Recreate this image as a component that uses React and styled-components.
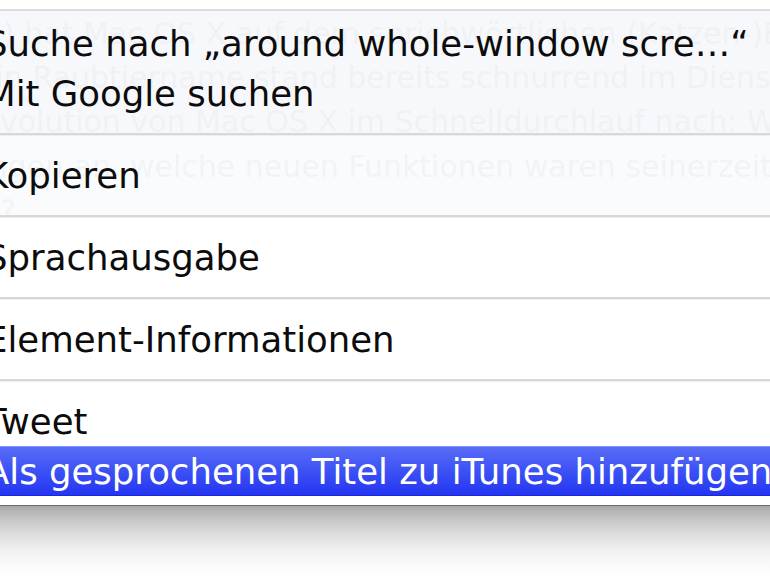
import React from "react";
import styled, { createGlobalStyle, css } from "styled-components";

const Global = createGlobalStyle`
  html, body { margin: 0; padding: 0; background: #fff; }
  body { width: 770px; height: 578px; overflow: hidden; }
  #root { width: 770px; height: 578px; }
`;

const Screen = styled.div`
  position: relative;
  width: 770px;
  height: 578px;
  overflow: hidden;
  background: #fff;
  font-family: "DejaVu Sans", "Liberation Sans", sans-serif;
`;

const Page = styled.div`
  display: flex;
  flex-direction: column;
  padding-top: 9px;
`;

const PageBlock = styled.div`
  height: ${(p) => p.$h}px;
  padding-top: ${(p) => p.$pt}px;
  box-sizing: border-box;
  background: ${(p) => p.$bg};
  color: ${(p) => p.$ink};
  font-size: 30px;
  line-height: 44px;
  white-space: nowrap;
  overflow: hidden;
`;

const PageLine = styled.div`
  margin-left: ${(p) => p.$indent}px;
`;

const Menu = styled.div`
  position: absolute;
  top: 9px;
  left: -40px;
  right: -40px;
  background: rgba(255, 255, 255, 0.85);
  border-top: 2px solid #dcdcdc;
  border-bottom: 1px solid #a4a4a4;
  padding: 7px 0 9px;

  &::after {
    content: "";
    position: absolute;
    left: 0;
    right: 0;
    top: 100%;
    height: 72px;
    background: linear-gradient(
      to bottom,
      rgba(0, 0, 0, 0.36) 0px,
      rgba(0, 0, 0, 0.29) 6px,
      rgba(0, 0, 0, 0.22) 15px,
      rgba(0, 0, 0, 0.13) 30px,
      rgba(0, 0, 0, 0.06) 45px,
      rgba(0, 0, 0, 0.02) 60px,
      rgba(0, 0, 0, 0) 72px
    );
  }
`;

const Item = styled.div`
  box-sizing: border-box;
  height: 50px;
  padding: 1px 0 0 25px;
  line-height: 49px;
  font-size: 35.5px;
  color: #0c0c0c;
  white-space: nowrap;

  ${(p) =>
    p.$active &&
    css`
      color: #fff;
      background: linear-gradient(to bottom, #5a6ef7 0%, #3f54f5 45%, #2234f2 100%);
      box-shadow: inset 0 1px 0 #8493f8, inset 0 -1px 0 #1a28dc;
    `}
`;

const Separator = styled.div`
  height: 32px;
  display: flex;
  align-items: center;

  &::before {
    content: "";
    flex: 1;
    height: 2px;
    background: #d8d8d8;
    box-shadow: 0 1px 0 #eeeeee;
  }
`;

const groups = [
  ["Suche nach \u201Earound whole-window scre\u2026\u201C", "Mit Google suchen"],
  ["Kopieren"],
  ["Sprachausgabe"],
  ["Element-Informationen"],
  ["Tweet", "Als gesprochenen Titel zu iTunes hinzuf\u00FCgen"],
];

export default function App() {
  return (
    <>
      <Global />
      <Screen>
        <Page>
          <PageBlock $h={126} $pt={3} $bg="rgb(202,208,228)" $ink="rgb(156,163,182)">
            <PageLine $indent={-16}>7) hat Mac OS X auf dem sprichwörtlichen (Katzen-)Ende</PageLine>
            <PageLine $indent={-23}>ein Raubtiername stand bereits schnurrend im Dienst</PageLine>
            <PageLine $indent={-19}>Evolution von Mac OS X im Schnelldurchlauf nach: Wer</PageLine>
          </PageBlock>
          <PageBlock $h={81} $pt={10} $bg="rgb(222,228,235)" $ink="rgb(170,176,190)">
            <PageLine $indent={-139}>Erinnerungen an, welche neuen Funktionen waren seinerzeit</PageLine>
            <PageLine $indent={0}>?</PageLine>
          </PageBlock>
        </Page>
        <Menu>
          {groups.map((g, gi) => (
            <React.Fragment key={gi}>
              {gi > 0 && <Separator />}
              {g.map((label) => (
                <Item key={label} $active={label.startsWith("Als")}>
                  {label}
                </Item>
              ))}
            </React.Fragment>
          ))}
        </Menu>
      </Screen>
    </>
  );
}
